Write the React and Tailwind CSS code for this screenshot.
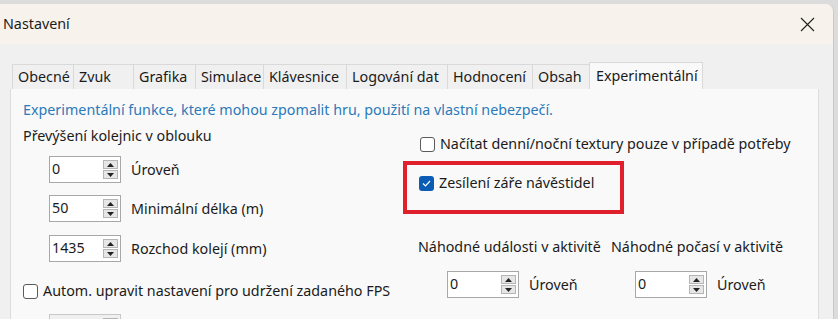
const tabs = [
  { label: "Obecné", w: "w-[61px]" },
  { label: "Zvuk", w: "w-[60px]" },
  { label: "Grafika", w: "w-[62px]" },
  { label: "Simulace", w: "w-[68px]" },
  { label: "Klávesnice", w: "w-[83px]" },
  { label: "Logování dat", w: "w-[101px]" },
  { label: "Hodnocení", w: "w-[85px]" },
  { label: "Obsah", w: "w-[57px]" },
];

function Spin({ value, disabled }) {
  return (
    <div
      className={`flex h-[27px] w-[72px] items-center justify-between border pl-[2px] pr-[2px] ${
        disabled ? "border-[#c8c8c8] bg-[#f0f0f0] text-[#9a9a9a]" : "border-[#a8a8a8] bg-white"
      }`}
    >
      <span className="leading-none">{value}</span>
      <div className="flex flex-col gap-[1px]">
        <div className="flex h-[9px] w-[15px] items-center justify-center border border-[#b5b5b5] bg-[#e6e6e6]">
          <svg width="7" height="4" viewBox="0 0 7 4">
            <path d="M0 4 L3.5 0 L7 4 Z" fill={disabled ? "#999" : "#222"} />
          </svg>
        </div>
        <div className="flex h-[9px] w-[15px] items-center justify-center border border-[#b5b5b5] bg-[#e6e6e6]">
          <svg width="7" height="4" viewBox="0 0 7 4">
            <path d="M0 0 L3.5 4 L7 0 Z" fill={disabled ? "#999" : "#222"} />
          </svg>
        </div>
      </div>
    </div>
  );
}

function Box({ checked }) {
  if (checked) {
    return (
      <div className="flex h-[15px] w-[15px] items-center justify-center rounded-[3px] bg-[#0b5cb5]">
        <svg width="9" height="7" viewBox="0 0 9 7">
          <path d="M1 3.5 L3.5 6 L8 1" stroke="white" strokeWidth="1.2" fill="none" />
        </svg>
      </div>
    );
  }
  return <div className="h-[15px] w-[15px] rounded-[3px] border border-[#5a5a5a] bg-white" />;
}

export default function App() {
  return (
    <div
      className="h-[319px] w-[838px] overflow-hidden bg-[#dcdcdc] pt-[4px] text-[14.3px] text-[#1b1b1b]"
      style={{ fontFamily: '"Noto Sans", "Open Sans", sans-serif' }}
    >
      <div className="h-[400px] w-[834px] overflow-hidden rounded-tr-[8px] border-r border-[#c9c9c9] bg-[#f0f0f0]">
        {/* title bar */}
        <div className="flex h-[40px] items-center justify-between bg-[#f7f2ec] pl-[3px] pr-[18px]">
          <span>Nastavení</span>
          <svg width="15" height="15" viewBox="0 0 15 15">
            <path d="M1 1 L14 14 M14 1 L1 14" stroke="#222" strokeWidth="1.1" />
          </svg>
        </div>

        {/* tabs */}
        <div className="mt-[18px] flex items-end pl-[12px]">
          {tabs.map((t) => (
            <div
              key={t.label}
              className={`${t.w} flex h-[25px] items-center border-t border-l border-[#d9d9d9] bg-[#f0f0f0] pl-[5px]`}
            >
              {t.label}
            </div>
          ))}
          <div className="flex h-[27px] w-[114px] items-center border-x border-t border-[#d9d9d9] bg-[#f9f9f9] pl-[6px]">
            Experimentální
          </div>
        </div>

        {/* panel */}
        <div className="ml-[10px] h-[300px] w-[809px] border border-t-0 border-[#dcdcdc] bg-[#f9f9f9] pl-[12px] pt-[11px]">
          <div className="h-[20px] leading-[20px] text-[#2b79b9]">
            Experimentální funkce, které mohou zpomalit hru, použití na vlastní nebezpečí.
          </div>
          <div className="flex">
            {/* left column */}
            <div className="flex w-[395px] flex-col">
              <div className="mt-[6px] h-[20px] leading-[20px]">Převýšení kolejnic v oblouku</div>
              <div className="ml-[26px] mt-[10px] flex items-center gap-[10px]">
                <Spin value="0" />
                <span>Úroveň</span>
              </div>
              <div className="ml-[26px] mt-[12px] flex items-center gap-[10px]">
                <Spin value="50" />
                <span>Minimální délka (m)</span>
              </div>
              <div className="ml-[26px] mt-[13px] flex items-center gap-[10px]">
                <Spin value="1435" />
                <span>Rozchod kolejí (mm)</span>
              </div>
              <div className="mt-[19px] flex h-[20px] items-center gap-[5px]">
                <Box />
                <span>Autom. upravit nastavení pro udržení zadaného FPS</span>
              </div>
              <div className="ml-[26px] mt-[13px] flex items-center gap-[10px]">
                <Spin value="60" disabled />
                <span className="text-[#9a9a9a]">Cílová obnovovací frekvence (FPS)</span>
              </div>
            </div>

            {/* right column */}
            <div className="flex flex-col">
              <div className="ml-[2px] mt-[14px] flex h-[20px] items-center gap-[5px]">
                <Box />
                <span>Načítat denní/noční textury pouze v případě potřeby</span>
              </div>
              <div className="-ml-[15px] mt-[7px] h-[53px] w-[221px] border-4 border-[#e0202d] pl-[12px] pt-[8px]">
                <div className="flex h-[20px] items-center gap-[5px]">
                  <Box checked />
                  <span>Zesílení záře návěstidel</span>
                </div>
              </div>
              <div className="mt-[23px] flex">
                <div className="flex w-[193px] flex-col">
                  <div className="h-[20px] leading-[20px]">Náhodné události v aktivitě</div>
                  <div className="ml-[29px] mt-[14px] flex items-center gap-[10px]">
                    <Spin value="0" />
                    <span>Úroveň</span>
                  </div>
                </div>
                <div className="flex flex-col">
                  <div className="h-[20px] leading-[20px]">Náhodné počasí v aktivitě</div>
                  <div className="ml-[24px] mt-[14px] flex items-center gap-[10px]">
                    <Spin value="0" />
                    <span>Úroveň</span>
                  </div>
                </div>
              </div>
            </div>
          </div>
        </div>
      </div>
    </div>
  );
}
